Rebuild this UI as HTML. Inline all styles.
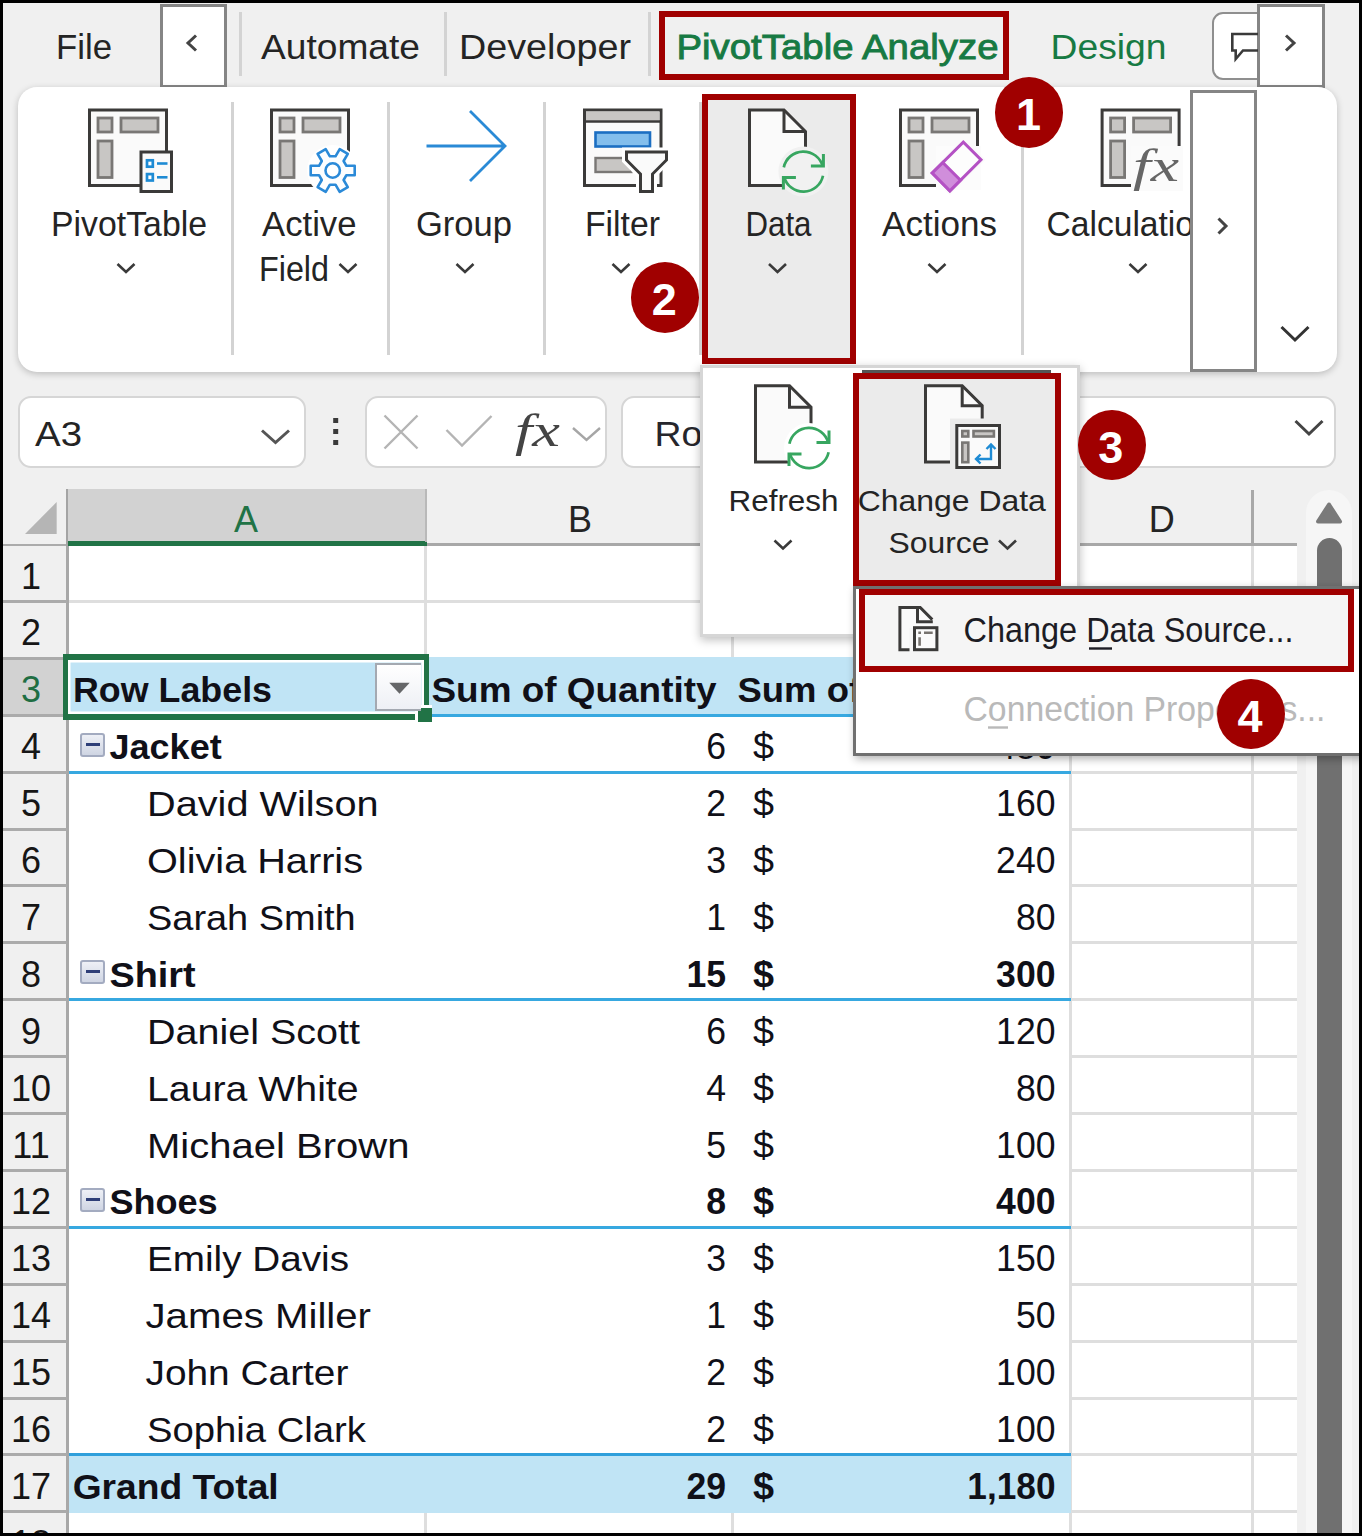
<!DOCTYPE html>
<html lang="en"><head><meta charset="utf-8"><title>Change Data Source - PivotTable Analyze</title>
<style>
html,body{margin:0;padding:0;background:#000;}
body{width:1362px;height:1536px;overflow:hidden;position:relative;font-family:"Liberation Sans",Arial,sans-serif;}
#app{position:absolute;left:3px;top:3px;width:1356px;height:1530px;background:#f0f0f0;overflow:hidden;}
#stage{position:absolute;left:-3px;top:-3px;width:1362px;height:1536px;}
#stage div{position:absolute;box-sizing:border-box;}
.layer{position:absolute;left:0;top:0;overflow:visible;pointer-events:none;}
.navbtn{background:#fff;border:3px solid #858585;}
.vsep{width:3px;background:#d3d3d3;}
.redbox{border:6px solid #a00000;}
.fbox{background:#fff;border:2px solid #d6d6d6;border-radius:13px;}
.card{background:#fff;border-radius:19px;box-shadow:0 2px 7px rgba(0,0,0,.22);}
.hl{background:#ebebeb;}
.step{border-radius:50%;background:#a00000;width:68px;height:70.5px;color:#fff;font-weight:bold;font-size:45px;line-height:76.5px;text-align:center;text-indent:-2px;}
.gridv{width:3px;background:#dedede;}
.gridh{height:3px;background:#dedede;}
.bl{height:3px;background:#37a8e0;}
.rh{height:3px;background:#ababab;left:3px;width:64px;}
</style></head><body><div id="app"><div id="stage">

<div id="sheet" style="left:68px;top:546px;width:1229px;height:990px;background:#fff"></div>
<div id="colA" style="left:67px;top:489px;width:360px;height:57px;background:#d2d2d2;border-bottom:5px solid #217346"></div>
<div style="left:427px;top:543px;width:870px;height:3px;background:#a8a8a8"></div>
<div style="left:3px;top:544px;width:64px;height:2px;background:#ababab"></div>
<div style="left:1251px;top:490px;width:3px;height:55px;background:#a8a8a8"></div>
<div style="left:425px;top:489px;width:2px;height:53px;background:#b9b9b9"></div>
<div id="row3hdr" style="left:3px;top:658px;width:64px;height:58px;background:#d2d2d2"></div>
<div style="left:66px;top:546px;width:3px;height:990px;background:#a8a8a8"></div>
<div style="left:65.5px;top:489px;width:2px;height:57px;background:#a4a4a4"></div>
<div class="rh" style="top:599.9px"></div>
<div class="rh" style="top:656.8px"></div>
<div class="rh" style="top:713.7px"></div>
<div class="rh" style="top:770.6px"></div>
<div class="rh" style="top:827.5px"></div>
<div class="rh" style="top:884.4px"></div>
<div class="rh" style="top:941.3px"></div>
<div class="rh" style="top:998.2px"></div>
<div class="rh" style="top:1055.1px"></div>
<div class="rh" style="top:1112.0px"></div>
<div class="rh" style="top:1168.9px"></div>
<div class="rh" style="top:1225.8px"></div>
<div class="rh" style="top:1282.7px"></div>
<div class="rh" style="top:1339.6px"></div>
<div class="rh" style="top:1396.5px"></div>
<div class="rh" style="top:1453.4px"></div>
<div class="rh" style="top:1510.3px"></div>
<div class="gridv" style="left:1068.8px;top:546px;height:990px"></div>
<div class="gridv" style="left:1250.8px;top:546px;height:990px"></div>
<div class="gridv" style="left:424.0px;top:546px;height:112px"></div>
<div class="gridv" style="left:424.0px;top:1513px;height:24px"></div>
<div class="gridv" style="left:730.7px;top:546px;height:112px"></div>
<div class="gridv" style="left:730.7px;top:1513px;height:24px"></div>
<div class="gridh" style="left:69px;top:599.9px;width:1228px"></div>
<div class="gridh" style="left:1070px;top:656.8px;width:227px"></div>
<div class="gridh" style="left:1070px;top:713.7px;width:227px"></div>
<div class="gridh" style="left:1070px;top:770.6px;width:227px"></div>
<div class="gridh" style="left:1070px;top:827.5px;width:227px"></div>
<div class="gridh" style="left:1070px;top:884.4px;width:227px"></div>
<div class="gridh" style="left:1070px;top:941.3px;width:227px"></div>
<div class="gridh" style="left:1070px;top:998.2px;width:227px"></div>
<div class="gridh" style="left:1070px;top:1055.1px;width:227px"></div>
<div class="gridh" style="left:1070px;top:1112.0px;width:227px"></div>
<div class="gridh" style="left:1070px;top:1168.9px;width:227px"></div>
<div class="gridh" style="left:1070px;top:1225.8px;width:227px"></div>
<div class="gridh" style="left:1070px;top:1282.7px;width:227px"></div>
<div class="gridh" style="left:1070px;top:1339.6px;width:227px"></div>
<div class="gridh" style="left:1070px;top:1396.5px;width:227px"></div>
<div class="gridh" style="left:1070px;top:1453.4px;width:227px"></div>
<div class="gridh" style="left:69px;top:1510.3px;width:1228px"></div>
<div id="pvhead" style="left:69px;top:657px;width:1002px;height:58px;background:#c0e4f5"></div>
<div id="pvtotal" style="left:69px;top:1455px;width:1002px;height:58px;background:#c0e4f5"></div>
<div class="bl" style="left:69px;top:770.8px;width:1002px"></div>
<div class="bl" style="left:69px;top:998.4px;width:1002px"></div>
<div class="bl" style="left:69px;top:1226.0px;width:1002px"></div>
<div class="bl" style="left:69px;top:714.3px;width:1002px;height:2.5px"></div>
<div class="bl" style="left:69px;top:1452.5px;width:1002px;background:#2f9fdb"></div>
<div id="sel" style="left:63px;top:654px;width:366px;height:66px;border:6px solid #217346;border-left-width:5.5px;border-right-width:5px;box-shadow:inset 0 0 0 2.5px #fff"></div>
<div style="left:415px;top:705.4px;width:17px;height:17px;background:#fff"></div>
<div style="left:418px;top:708.3px;width:14px;height:14.2px;background:#217346"></div>
<div id="filterbtn" style="left:375.2px;top:663px;width:45.6px;height:48px;border:2.7px solid #a4a9b1;border-right:0;background:linear-gradient(#fff,#eef0f5)"></div>
<div style="left:80px;top:732.7px;width:24.5px;height:24px;border:2px solid #a3abc0;border-radius:3px;background:linear-gradient(#eef0f6,#cfd5e3)"></div>
<div style="left:86px;top:742.5px;width:13.5px;height:3px;background:#2f3f78"></div>
<div style="left:80px;top:960.3px;width:24.5px;height:24px;border:2px solid #a3abc0;border-radius:3px;background:linear-gradient(#eef0f6,#cfd5e3)"></div>
<div style="left:86px;top:970.1px;width:13.5px;height:3px;background:#2f3f78"></div>
<div style="left:80px;top:1187.9px;width:24.5px;height:24px;border:2px solid #a3abc0;border-radius:3px;background:linear-gradient(#eef0f6,#cfd5e3)"></div>
<div style="left:86px;top:1197.7px;width:13.5px;height:3px;background:#2f3f78"></div>
<svg class="layer sheettext" width="1362" height="1536" viewBox="0 0 1362 1536" font-family="Liberation Sans, Arial, sans-serif">
<polygon points="25,534 56.7,534 56.7,502" fill="#b5b5b5"/>
<polygon points="389.3,682.7 409.7,682.7 399.5,693.7" fill="#666769"/>
<text x="246" y="531.5" font-size="36" fill="#217346" text-anchor="middle">A</text>
<text x="580" y="531.5" font-size="36" fill="#242424" text-anchor="middle">B</text>
<text x="901" y="531.5" font-size="36" fill="#242424" text-anchor="middle">C</text>
<text x="1161.7" y="531.5" font-size="36" fill="#242424" text-anchor="middle">D</text>
<text x="31" y="588.5" font-size="36" fill="#161616" text-anchor="middle">1</text>
<text x="31" y="645.4" font-size="36" fill="#161616" text-anchor="middle">2</text>
<text x="31" y="702.3" font-size="36" fill="#1f6e43" text-anchor="middle">3</text>
<text x="31" y="759.2" font-size="36" fill="#161616" text-anchor="middle">4</text>
<text x="31" y="816.1" font-size="36" fill="#161616" text-anchor="middle">5</text>
<text x="31" y="873.0" font-size="36" fill="#161616" text-anchor="middle">6</text>
<text x="31" y="929.9" font-size="36" fill="#161616" text-anchor="middle">7</text>
<text x="31" y="986.8" font-size="36" fill="#161616" text-anchor="middle">8</text>
<text x="31" y="1043.7" font-size="36" fill="#161616" text-anchor="middle">9</text>
<text x="31" y="1100.6" font-size="36" fill="#161616" text-anchor="middle">10</text>
<text x="31" y="1157.5" font-size="36" fill="#161616" text-anchor="middle">11</text>
<text x="31" y="1214.4" font-size="36" fill="#161616" text-anchor="middle">12</text>
<text x="31" y="1271.3" font-size="36" fill="#161616" text-anchor="middle">13</text>
<text x="31" y="1328.2" font-size="36" fill="#161616" text-anchor="middle">14</text>
<text x="31" y="1385.1" font-size="36" fill="#161616" text-anchor="middle">15</text>
<text x="31" y="1442.0" font-size="36" fill="#161616" text-anchor="middle">16</text>
<text x="31" y="1498.9" font-size="36" fill="#161616" text-anchor="middle">17</text>
<text x="31" y="1555.8" font-size="36" fill="#161616" text-anchor="middle">18</text>
<text x="73" y="702.3" font-size="35" fill="#101018" font-weight="bold" textLength="199" lengthAdjust="spacingAndGlyphs">Row Labels</text>
<text x="109.5" y="759.2" font-size="35" fill="#101018" font-weight="bold" textLength="112.2" lengthAdjust="spacingAndGlyphs">Jacket</text>
<text x="706.2" y="759.2" font-size="36" fill="#101018" textLength="19.8" lengthAdjust="spacingAndGlyphs">6</text>
<text x="753" y="759.2" font-size="36" fill="#101018" textLength="21" lengthAdjust="spacingAndGlyphs">$</text>
<text x="147" y="816.1" font-size="35" fill="#101018" textLength="231.6" lengthAdjust="spacingAndGlyphs">David Wilson</text>
<text x="706.2" y="816.1" font-size="36" fill="#101018" textLength="19.8" lengthAdjust="spacingAndGlyphs">2</text>
<text x="753" y="816.1" font-size="36" fill="#101018" textLength="21" lengthAdjust="spacingAndGlyphs">$</text>
<text x="996.1" y="816.1" font-size="36" fill="#101018" textLength="59.4" lengthAdjust="spacingAndGlyphs">160</text>
<text x="147" y="873.0" font-size="35" fill="#101018" textLength="216" lengthAdjust="spacingAndGlyphs">Olivia Harris</text>
<text x="706.2" y="873.0" font-size="36" fill="#101018" textLength="19.8" lengthAdjust="spacingAndGlyphs">3</text>
<text x="753" y="873.0" font-size="36" fill="#101018" textLength="21" lengthAdjust="spacingAndGlyphs">$</text>
<text x="996.1" y="873.0" font-size="36" fill="#101018" textLength="59.4" lengthAdjust="spacingAndGlyphs">240</text>
<text x="147" y="929.9" font-size="35" fill="#101018" textLength="208.7" lengthAdjust="spacingAndGlyphs">Sarah Smith</text>
<text x="706.2" y="929.9" font-size="36" fill="#101018" textLength="19.8" lengthAdjust="spacingAndGlyphs">1</text>
<text x="753" y="929.9" font-size="36" fill="#101018" textLength="21" lengthAdjust="spacingAndGlyphs">$</text>
<text x="1015.9" y="929.9" font-size="36" fill="#101018" textLength="39.6" lengthAdjust="spacingAndGlyphs">80</text>
<text x="109.4" y="986.8" font-size="35" fill="#101018" font-weight="bold" textLength="86.2" lengthAdjust="spacingAndGlyphs">Shirt</text>
<text x="686.4" y="986.8" font-size="36" fill="#101018" font-weight="bold" textLength="39.6" lengthAdjust="spacingAndGlyphs">15</text>
<text x="753" y="986.8" font-size="36" fill="#101018" font-weight="bold" textLength="21" lengthAdjust="spacingAndGlyphs">$</text>
<text x="996.1" y="986.8" font-size="36" fill="#101018" font-weight="bold" textLength="59.4" lengthAdjust="spacingAndGlyphs">300</text>
<text x="147" y="1043.7" font-size="35" fill="#101018" textLength="213" lengthAdjust="spacingAndGlyphs">Daniel Scott</text>
<text x="706.2" y="1043.7" font-size="36" fill="#101018" textLength="19.8" lengthAdjust="spacingAndGlyphs">6</text>
<text x="753" y="1043.7" font-size="36" fill="#101018" textLength="21" lengthAdjust="spacingAndGlyphs">$</text>
<text x="996.1" y="1043.7" font-size="36" fill="#101018" textLength="59.4" lengthAdjust="spacingAndGlyphs">120</text>
<text x="147" y="1100.6" font-size="35" fill="#101018" textLength="211.6" lengthAdjust="spacingAndGlyphs">Laura White</text>
<text x="706.2" y="1100.6" font-size="36" fill="#101018" textLength="19.8" lengthAdjust="spacingAndGlyphs">4</text>
<text x="753" y="1100.6" font-size="36" fill="#101018" textLength="21" lengthAdjust="spacingAndGlyphs">$</text>
<text x="1015.9" y="1100.6" font-size="36" fill="#101018" textLength="39.6" lengthAdjust="spacingAndGlyphs">80</text>
<text x="147" y="1157.5" font-size="35" fill="#101018" textLength="262.4" lengthAdjust="spacingAndGlyphs">Michael Brown</text>
<text x="706.2" y="1157.5" font-size="36" fill="#101018" textLength="19.8" lengthAdjust="spacingAndGlyphs">5</text>
<text x="753" y="1157.5" font-size="36" fill="#101018" textLength="21" lengthAdjust="spacingAndGlyphs">$</text>
<text x="996.1" y="1157.5" font-size="36" fill="#101018" textLength="59.4" lengthAdjust="spacingAndGlyphs">100</text>
<text x="109.4" y="1214.4" font-size="35" fill="#101018" font-weight="bold" textLength="108.3" lengthAdjust="spacingAndGlyphs">Shoes</text>
<text x="706.2" y="1214.4" font-size="36" fill="#101018" font-weight="bold" textLength="19.8" lengthAdjust="spacingAndGlyphs">8</text>
<text x="753" y="1214.4" font-size="36" fill="#101018" font-weight="bold" textLength="21" lengthAdjust="spacingAndGlyphs">$</text>
<text x="996.1" y="1214.4" font-size="36" fill="#101018" font-weight="bold" textLength="59.4" lengthAdjust="spacingAndGlyphs">400</text>
<text x="147" y="1271.3" font-size="35" fill="#101018" textLength="202" lengthAdjust="spacingAndGlyphs">Emily Davis</text>
<text x="706.2" y="1271.3" font-size="36" fill="#101018" textLength="19.8" lengthAdjust="spacingAndGlyphs">3</text>
<text x="753" y="1271.3" font-size="36" fill="#101018" textLength="21" lengthAdjust="spacingAndGlyphs">$</text>
<text x="996.1" y="1271.3" font-size="36" fill="#101018" textLength="59.4" lengthAdjust="spacingAndGlyphs">150</text>
<text x="145.5" y="1328.2" font-size="35" fill="#101018" textLength="225.5" lengthAdjust="spacingAndGlyphs">James Miller</text>
<text x="706.2" y="1328.2" font-size="36" fill="#101018" textLength="19.8" lengthAdjust="spacingAndGlyphs">1</text>
<text x="753" y="1328.2" font-size="36" fill="#101018" textLength="21" lengthAdjust="spacingAndGlyphs">$</text>
<text x="1015.9" y="1328.2" font-size="36" fill="#101018" textLength="39.6" lengthAdjust="spacingAndGlyphs">50</text>
<text x="145.5" y="1385.1" font-size="35" fill="#101018" textLength="202.9" lengthAdjust="spacingAndGlyphs">John Carter</text>
<text x="706.2" y="1385.1" font-size="36" fill="#101018" textLength="19.8" lengthAdjust="spacingAndGlyphs">2</text>
<text x="753" y="1385.1" font-size="36" fill="#101018" textLength="21" lengthAdjust="spacingAndGlyphs">$</text>
<text x="996.1" y="1385.1" font-size="36" fill="#101018" textLength="59.4" lengthAdjust="spacingAndGlyphs">100</text>
<text x="147" y="1442.0" font-size="35" fill="#101018" textLength="219" lengthAdjust="spacingAndGlyphs">Sophia Clark</text>
<text x="706.2" y="1442.0" font-size="36" fill="#101018" textLength="19.8" lengthAdjust="spacingAndGlyphs">2</text>
<text x="753" y="1442.0" font-size="36" fill="#101018" textLength="21" lengthAdjust="spacingAndGlyphs">$</text>
<text x="996.1" y="1442.0" font-size="36" fill="#101018" textLength="59.4" lengthAdjust="spacingAndGlyphs">100</text>
<text x="72.7" y="1498.9" font-size="35" fill="#101018" font-weight="bold" textLength="206.0" lengthAdjust="spacingAndGlyphs">Grand Total</text>
<text x="686.4" y="1498.9" font-size="36" fill="#101018" font-weight="bold" textLength="39.6" lengthAdjust="spacingAndGlyphs">29</text>
<text x="753" y="1498.9" font-size="36" fill="#101018" font-weight="bold" textLength="21" lengthAdjust="spacingAndGlyphs">$</text>
<text x="967.3" y="1498.9" font-size="36" fill="#101018" font-weight="bold" textLength="88.2" lengthAdjust="spacingAndGlyphs">1,180</text>
<text x="431.5" y="702.3" font-size="35" fill="#101018" font-weight="bold" textLength="285" lengthAdjust="spacingAndGlyphs">Sum of Quantity</text>
<text x="737.5" y="702.3" font-size="35" fill="#101018" font-weight="bold" textLength="270" lengthAdjust="spacingAndGlyphs">Sum of Amount</text>
<text x="996" y="759.2" font-size="36" fill="#101018" textLength="59.4" lengthAdjust="spacingAndGlyphs">480</text>
</svg>
<div id="vscroll" style="left:1297px;top:489px;width:62px;height:1047px;background:#f0f0f0"></div>
<div style="left:1306px;top:490px;width:46px;height:1100px;background:#f6f6f6;border-radius:23px"></div>
<div id="thumb" style="left:1316.5px;top:537.5px;width:25.5px;height:1020px;background:#707070;border-radius:12.7px"></div>
<svg class="layer scroll" width="1362" height="1536" viewBox="0 0 1362 1536" font-family="Liberation Sans, Arial, sans-serif"><path d="M1318 521.5 L1329 504.5 L1340 521.5 Z" fill="#7a7a7a" stroke="#7a7a7a" stroke-width="4" stroke-linejoin="round"/></svg>
<div id="namebox" class="fbox" style="left:18px;top:396px;width:288px;height:72px"></div>
<div id="fxbox" class="fbox" style="left:365px;top:396px;width:242px;height:72px"></div>
<div id="formula" class="fbox" style="left:620.5px;top:396px;width:715.5px;height:72px"></div>
<svg class="layer formulatext" width="1362" height="1536" viewBox="0 0 1362 1536" font-family="Liberation Sans, Arial, sans-serif">
<text x="35" y="445.5" font-size="35" fill="#242424" textLength="47" lengthAdjust="spacingAndGlyphs">A3</text>
<path d="M262.0 430.5 L275.5 442.5 L289.0 430.5" fill="none" stroke="#555" stroke-width="3" stroke-linejoin="miter"/>
<rect x="333.2" y="418.0" width="5" height="5" fill="#3a3a3a"/>
<rect x="333.2" y="429.0" width="5" height="5" fill="#3a3a3a"/>
<rect x="333.2" y="440.0" width="5" height="5" fill="#3a3a3a"/>
<path d="M384.5 415.5 L417.5 448.5 M417.5 415.5 L384.5 448.5" stroke="#b4b4b4" stroke-width="2.4" fill="none"/>
<path d="M446.5 430 L462 445.5 L491.5 416" stroke="#b4b4b4" stroke-width="2.4" fill="none"/>
<text x="515" y="446" font-family="Liberation Serif, serif" font-style="italic" font-size="47" fill="#444" textLength="45" lengthAdjust="spacingAndGlyphs">fx</text>
<path d="M573.0 428.0 L586.5 440.0 L600.0 428.0" fill="none" stroke="#a6a6a6" stroke-width="2.4" stroke-linejoin="miter"/>
<text x="654.5" y="446" font-size="35" fill="#26262c" textLength="195" lengthAdjust="spacingAndGlyphs">Row Labels</text>
<path d="M1295.5 421.0 L1309 434.0 L1322.5 421.0" fill="none" stroke="#444" stroke-width="3" stroke-linejoin="miter"/>
</svg>
<div id="backbtn" class="navbtn" style="left:159.5px;top:3.5px;width:67.5px;height:84px"></div>
<div class="vsep" style="left:238.5px;top:12px;height:64px"></div>
<div class="vsep" style="left:443.5px;top:12px;height:64px"></div>
<div class="vsep" style="left:648px;top:12px;height:64px"></div>
<div id="commentbtn" style="left:1211.5px;top:11.5px;width:80px;height:68px;background:#fff;border:2.5px solid #8f8f8f;border-radius:11px"></div>
<div id="fwdbtn" class="navbtn" style="left:1257px;top:3.5px;width:68px;height:84px"></div>
<div class="redbox" style="left:659px;top:11px;width:350px;height:69px"></div>
<svg class="layer tabtext" width="1362" height="1536" viewBox="0 0 1362 1536" font-family="Liberation Sans, Arial, sans-serif">
<text x="56" y="59" font-size="35" fill="#242424" textLength="56" lengthAdjust="spacingAndGlyphs">File</text>
<text x="261" y="59" font-size="35" fill="#242424" textLength="159" lengthAdjust="spacingAndGlyphs">Automate</text>
<text x="459" y="59" font-size="35" fill="#242424" textLength="172" lengthAdjust="spacingAndGlyphs">Developer</text>
<text x="676.5" y="59" font-size="35" fill="#177a43" textLength="322" lengthAdjust="spacingAndGlyphs" stroke="#177a43" stroke-width="0.9">PivotTable Analyze</text>
<text x="1050.5" y="59" font-size="35" fill="#177a43" textLength="116" lengthAdjust="spacingAndGlyphs">Design</text>
<path d="M196 35.5 L188 43 L196 50.5" fill="none" stroke="#444" stroke-width="3"/>
<path d="M1286 35.5 L1294 43 L1286 50.5" fill="none" stroke="#444" stroke-width="3"/>
<path d="M1258 34 H1232.3 V50.5 H1235.7 V59 L1243 50.5 H1258" fill="none" stroke="#3a3a3a" stroke-width="2.6"/>
</svg>
<div id="ribbon" class="card" style="left:18px;top:87px;width:1319px;height:285px"></div>
<div class="vsep" style="left:231px;top:102px;height:253px"></div>
<div class="vsep" style="left:387px;top:102px;height:253px"></div>
<div class="vsep" style="left:543px;top:102px;height:253px"></div>
<div class="vsep" style="left:699px;top:102px;height:253px"></div>
<div class="vsep" style="left:1021px;top:102px;height:253px"></div>
<div id="databtn" class="redbox hl" style="left:702px;top:94px;width:154px;height:270px"></div>
<div id="overflow" class="navbtn" style="left:1189.5px;top:89.5px;width:67px;height:282.5px;z-index:2"></div>
<svg class="layer ribbontext" width="1362" height="1536" viewBox="0 0 1362 1536" font-family="Liberation Sans, Arial, sans-serif">
<rect x="89.5" y="110.0" width="77" height="75.5" fill="#fafafa" stroke="#3b3a39" stroke-width="3"/><rect x="98" y="118.0" width="14" height="14" fill="#c8c6c4" stroke="#797775" stroke-width="2.8"/><rect x="121" y="118.0" width="37" height="14" fill="#c8c6c4" stroke="#797775" stroke-width="2.8"/><rect x="98" y="141.0" width="14" height="36.5" fill="#c8c6c4" stroke="#797775" stroke-width="2.8"/>
<rect x="141" y="152" width="30.5" height="39.5" fill="#fafafa" stroke="#3b3a39" stroke-width="3"/>
<rect x="147" y="160.3" width="5.8" height="6.4" fill="#fff" stroke="#1e8bd4" stroke-width="2.7"/>
<path d="M157 163.5 H167.5" stroke="#1e8bd4" stroke-width="2.6"/>
<rect x="147" y="174.10000000000002" width="5.8" height="6.4" fill="#fff" stroke="#1e8bd4" stroke-width="2.7"/>
<path d="M157 177.3 H167.5" stroke="#1e8bd4" stroke-width="2.6"/>
<text x="51" y="235.6" font-size="35" fill="#242424" textLength="156" lengthAdjust="spacingAndGlyphs">PivotTable</text>
<path d="M117.5 264.0 L126 272.0 L134.5 264.0" fill="none" stroke="#3a3a3a" stroke-width="2.6" stroke-linejoin="miter"/>
<rect x="271.5" y="110.0" width="77" height="75.5" fill="#fafafa" stroke="#3b3a39" stroke-width="3"/><rect x="280" y="118.0" width="14" height="14" fill="#c8c6c4" stroke="#797775" stroke-width="2.8"/><rect x="303" y="118.0" width="37" height="14" fill="#c8c6c4" stroke="#797775" stroke-width="2.8"/><rect x="280" y="141.0" width="14" height="36.5" fill="#c8c6c4" stroke="#797775" stroke-width="2.8"/>
<circle cx="332.7" cy="170.5" r="25.5" fill="#fff"/><polygon points="354.7,165.8 354.7,175.2 346.4,175.2 343.6,180.0 347.8,187.2 339.7,191.9 335.5,184.7 329.9,184.7 325.7,191.9 317.6,187.2 321.8,180.0 319.0,175.2 310.7,175.2 310.7,165.8 319.0,165.8 321.8,161.0 317.6,153.8 325.7,149.1 329.9,156.3 335.5,156.3 339.7,149.1 347.8,153.8 343.6,161.0 346.4,165.8" fill="#fdfeff" stroke="#2b8ad8" stroke-width="2.6" stroke-linejoin="round"/><circle cx="332.7" cy="170.5" r="7.2" fill="#fff" stroke="#2b8ad8" stroke-width="2.6"/>
<text x="262" y="235.6" font-size="35" fill="#242424" textLength="94.5" lengthAdjust="spacingAndGlyphs">Active</text>
<text x="259" y="281" font-size="35" fill="#242424" textLength="70" lengthAdjust="spacingAndGlyphs">Field</text>
<path d="M339.5 264.0 L348 272.0 L356.5 264.0" fill="none" stroke="#3a3a3a" stroke-width="2.6" stroke-linejoin="miter"/>
<path d="M426.5 146 H505 M470 111 L505 146 L470 181" fill="none" stroke="#2a8ad6" stroke-width="2.8"/>
<text x="416" y="235.6" font-size="35" fill="#242424" textLength="96" lengthAdjust="spacingAndGlyphs">Group</text>
<path d="M456.5 264.0 L465 272.0 L473.5 264.0" fill="none" stroke="#3a3a3a" stroke-width="2.6" stroke-linejoin="miter"/>
<rect x="584.5" y="110" width="76.5" height="75.5" fill="#fafafa" stroke="#3b3a39" stroke-width="3"/>
<rect x="586" y="111.5" width="73.5" height="9" fill="#c8c6c4"/><path d="M585 121.5 H660" stroke="#3b3a39" stroke-width="2.4"/>
<rect x="595.5" y="132.5" width="54.5" height="14" fill="#83beec" stroke="#1b6ec2" stroke-width="2.6"/>
<rect x="595.5" y="158" width="36" height="14" fill="#c8c6c4" stroke="#797775" stroke-width="2.4"/>
<path d="M626.5 152 H666.5 V160 L652.5 174 V191.5 H640.5 V174 L626.5 160 Z" fill="#fff" stroke="#fff" stroke-width="9"/>
<path d="M626.5 152 H666.5 V160 L652.5 174 V191.5 H640.5 V174 L626.5 160 Z" fill="#fafafa" stroke="#3b3a39" stroke-width="3" stroke-linejoin="miter"/>
<text x="585" y="235.6" font-size="35" fill="#242424" textLength="75" lengthAdjust="spacingAndGlyphs">Filter</text>
<path d="M612.5 264.0 L621 272.0 L629.5 264.0" fill="none" stroke="#3a3a3a" stroke-width="2.6" stroke-linejoin="miter"/>
<path d="M749.5 110.0 H784 L805.5 131.5 V185.5 H749.5 Z" fill="#fafafa" stroke="#3b3a39" stroke-width="3" stroke-linejoin="miter"/><path d="M784 110.0 V131.5 H805.5" fill="none" stroke="#3b3a39" stroke-width="3"/>
<circle cx="803.4" cy="171.6" r="25" fill="#f1f1f1"/><path d="M783.8 167.4 A20 20 0 0 1 822.7 166.4" fill="none" stroke="#37a660" stroke-width="2.7"/><path d="M823.0 175.8 A20 20 0 0 1 784.1 176.8" fill="none" stroke="#37a660" stroke-width="2.7"/><path d="M823.4 154.1 V166.1 H810.9" fill="none" stroke="#37a660" stroke-width="3"/><path d="M783.4 189.6 V177.6 H795.9" fill="none" stroke="#37a660" stroke-width="3"/>
<text x="745.5" y="235.6" font-size="35" fill="#242424" textLength="66" lengthAdjust="spacingAndGlyphs">Data</text>
<path d="M769.0 264.0 L777.5 272.0 L786.0 264.0" fill="none" stroke="#3a3a3a" stroke-width="2.6" stroke-linejoin="miter"/>
<rect x="900.5" y="110.0" width="77" height="75.5" fill="#fafafa" stroke="#3b3a39" stroke-width="3"/><rect x="909" y="118.0" width="14" height="14" fill="#c8c6c4" stroke="#797775" stroke-width="2.8"/><rect x="932" y="118.0" width="37" height="14" fill="#c8c6c4" stroke="#797775" stroke-width="2.8"/><rect x="909" y="141.0" width="14" height="36.5" fill="#c8c6c4" stroke="#797775" stroke-width="2.8"/>
<rect x="936" y="146" width="45" height="44" fill="#fcfcfc"/>
<g transform="translate(956.6,166.4) rotate(-45)"><rect x="-25" y="-15.5" width="50" height="31" fill="#fafafa"/><rect x="-22" y="-12.5" width="44" height="25" fill="#fdfdfd" stroke="#b451c4" stroke-width="3"/><rect x="-22" y="-12.5" width="15" height="25" fill="#d08edb" stroke="#b451c4" stroke-width="3"/></g>
<text x="882" y="235.6" font-size="35" fill="#242424" textLength="115" lengthAdjust="spacingAndGlyphs">Actions</text>
<path d="M928.5 264.0 L937 272.0 L945.5 264.0" fill="none" stroke="#3a3a3a" stroke-width="2.6" stroke-linejoin="miter"/>
<rect x="1102.1" y="110.0" width="77" height="75.5" fill="#fafafa" stroke="#3b3a39" stroke-width="3"/><rect x="1110.6" y="118.0" width="14" height="14" fill="#c8c6c4" stroke="#797775" stroke-width="2.8"/><rect x="1133.6" y="118.0" width="37" height="14" fill="#c8c6c4" stroke="#797775" stroke-width="2.8"/><rect x="1110.6" y="141.0" width="14" height="36.5" fill="#c8c6c4" stroke="#797775" stroke-width="2.8"/>
<rect x="1131" y="146" width="52" height="45" fill="#fbfbfb"/>
<text x="1133" y="180.5" font-family="Liberation Serif, serif" font-style="italic" font-size="47" fill="#666" textLength="46" lengthAdjust="spacingAndGlyphs">fx</text>
<text x="1046.5" y="235.6" font-size="35" fill="#242424" textLength="183" lengthAdjust="spacingAndGlyphs">Calculations</text>
<path d="M1129.5 264.0 L1138 272.0 L1146.5 264.0" fill="none" stroke="#3a3a3a" stroke-width="2.6" stroke-linejoin="miter"/>
<path d="M1281.5 327.0 L1295 340.0 L1308.5 327.0" fill="none" stroke="#333" stroke-width="3" stroke-linejoin="miter"/>
</svg>
<svg class="layer ovf" style="z-index:3" width="1362" height="1536" viewBox="0 0 1362 1536" font-family="Liberation Sans, Arial, sans-serif"><path d="M1218.5 218.5 L1226 226 L1218.5 233.5" fill="none" stroke="#444" stroke-width="3"/></svg>
<div id="datamenu" style="left:700px;top:365px;width:380px;height:272px;background:#fff;border:3px solid #d6d6d6;box-shadow:0 3px 9px rgba(0,0,0,.25);z-index:4"></div>
<div style="left:862px;top:370px;width:189px;height:4px;background:#555;z-index:4"></div><div id="cdsbtn" class="redbox hl" style="left:853px;top:373px;width:208px;height:213px;z-index:4"></div>
<svg class="layer menutext" style="z-index:5" width="1362" height="1536" viewBox="0 0 1362 1536" font-family="Liberation Sans, Arial, sans-serif">
<path d="M755.5 385.7 H789.5 L811.0 407.2 V462.0 H755.5 Z" fill="#fafafa" stroke="#3b3a39" stroke-width="3" stroke-linejoin="miter"/><path d="M789.5 385.7 V407.2 H811.0" fill="none" stroke="#3b3a39" stroke-width="3"/>
<circle cx="809" cy="448" r="25" fill="#fff"/><path d="M789.4 443.8 A20 20 0 0 1 828.3 442.8" fill="none" stroke="#37a660" stroke-width="2.7"/><path d="M828.6 452.2 A20 20 0 0 1 789.7 453.2" fill="none" stroke="#37a660" stroke-width="2.7"/><path d="M829 430.5 V442.5 H816.5" fill="none" stroke="#37a660" stroke-width="3"/><path d="M789 466 V454 H801.5" fill="none" stroke="#37a660" stroke-width="3"/>
<text x="728.5" y="511" font-size="30" fill="#242424" textLength="110" lengthAdjust="spacingAndGlyphs">Refresh</text>
<path d="M774.5 540.5 L783 548.5 L791.5 540.5" fill="none" stroke="#3a3a3a" stroke-width="2.6" stroke-linejoin="miter"/>
<path d="M925.5 385.7 H962.2 L982.2 405.7 V462.0 H925.5 Z" fill="#fafafa" stroke="#3b3a39" stroke-width="3" stroke-linejoin="miter"/><path d="M962.2 385.7 V405.7 H982.2" fill="none" stroke="#3b3a39" stroke-width="3"/>
<rect x="950" y="418.5" width="54" height="53" fill="#ebebeb"/>
<rect x="956.8" y="425.5" width="42.7" height="42" fill="#fafafa" stroke="#3b3a39" stroke-width="3"/>
<rect x="962.3" y="431" width="6" height="5.5" fill="#c8c6c4" stroke="#797775" stroke-width="2.6"/>
<rect x="973.5" y="431" width="20.4" height="5.5" fill="#c8c6c4" stroke="#797775" stroke-width="2.6"/>
<rect x="962.3" y="442.6" width="6" height="19.6" fill="#c8c6c4" stroke="#797775" stroke-width="2.6"/>
<path d="M976 459 H991 V444.5 M980.5 454.5 L976 459 L980.5 463.5 M986.5 449 L991 444.5 L995.5 449" fill="none" stroke="#1e8bd4" stroke-width="2.4"/>
<text x="857.8" y="511" font-size="30" fill="#242424" textLength="188" lengthAdjust="spacingAndGlyphs">Change Data</text>
<text x="888.5" y="553" font-size="30" fill="#242424" textLength="101" lengthAdjust="spacingAndGlyphs">Source</text>
<path d="M999.0 540.5 L1007.5 548.5 L1016.0 540.5" fill="none" stroke="#3a3a3a" stroke-width="2.6" stroke-linejoin="miter"/>
</svg>
<div id="submenu" style="left:853px;top:586px;width:520px;height:170px;background:#fff;border:3px solid #707070;box-shadow:2px 3px 8px rgba(0,0,0,.3);z-index:6"></div>
<div id="cdsitem" class="redbox" style="left:859px;top:589px;width:495px;height:82.5px;background:#f5f5f5;z-index:6"></div>
<svg class="layer subtext" style="z-index:7" width="1362" height="1536" viewBox="0 0 1362 1536" font-family="Liberation Sans, Arial, sans-serif">
<path d="M909.5 649.7 H899.9 V607.5 H920.5 L932.5 619.5 V628 H909.5 Z" fill="#fafafa" stroke="none"/>
<path d="M909.5 649.7 H899.9 V607.5 H920.2 L932.3 619.6" fill="none" stroke="#3b3a39" stroke-width="3"/>
<path d="M917.5 607.5 V621.7 H932.8" fill="none" stroke="#3b3a39" stroke-width="3"/>
<rect x="914.5" y="627.7" width="22.4" height="22" fill="#fafafa" stroke="#3b3a39" stroke-width="3"/>
<path d="M918.3 632.8 H921 M924 632.8 H932.7 M919.6 637.2 V645.7" stroke="#77736f" stroke-width="2.6" fill="none"/>
<text x="963.5" y="642" font-size="35" fill="#1c1c24" textLength="330" lengthAdjust="spacingAndGlyphs">Change Data Source...</text>
<path d="M1089 648.5 H1112" stroke="#1c1c24" stroke-width="2.4"/>
<text x="963.5" y="721" font-size="35" fill="#b9b9b9" textLength="362" lengthAdjust="spacingAndGlyphs">Connection Properties...</text>
<path d="M988 727.5 H1008" stroke="#b9b9b9" stroke-width="2.4"/>
</svg>
<div class="step" style="left:995.4px;top:77.0px;z-index:9">1</div>
<div class="step" style="left:631.2px;top:262.1px;z-index:9">2</div>
<div class="step" style="left:1077.8px;top:409.9px;z-index:9">3</div>
<div class="step" style="left:1217.0px;top:678.5px;z-index:9">4</div>
</div></div></body></html>
